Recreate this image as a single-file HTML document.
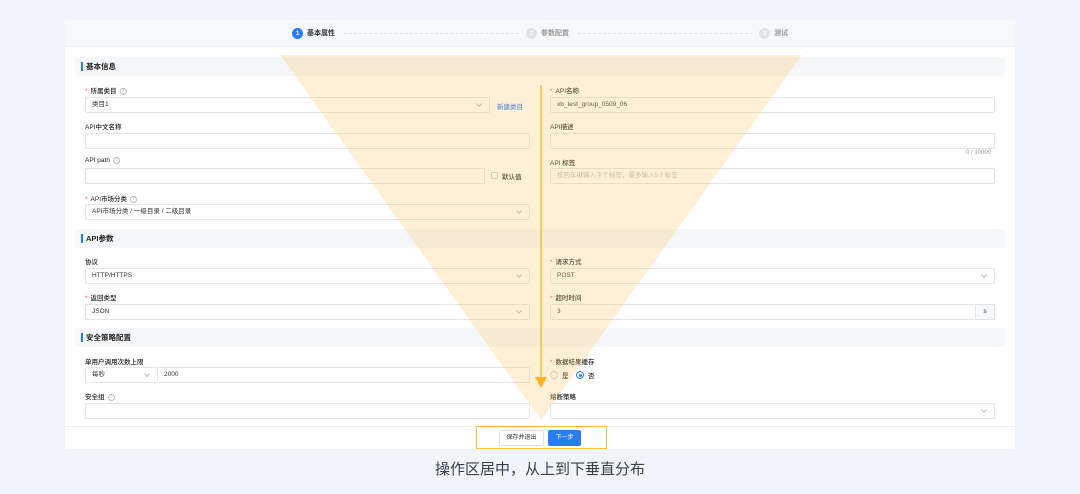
<!DOCTYPE html>
<html><head><meta charset="utf-8"><style>
*{margin:0;padding:0;box-sizing:border-box}
body{width:1080px;height:494px;background:#f1f4f8;font-family:"Liberation Sans","Noto Sans CJK SC",sans-serif;position:relative;overflow:hidden;color:#333}
.a{position:absolute}
.card{left:65px;top:20px;width:950px;height:429px;background:#fff}
.steps{left:65px;top:20px;width:950px;height:27px;background:#f7f8fa;border-bottom:1px solid #eceef2}
.sec{position:absolute;left:75px;width:930px;height:19px;background:#f6f7f9;border-radius:3px;font-size:7.5px;font-weight:bold;line-height:19px;padding-left:11px;color:#222}
.sec:before{content:"";position:absolute;left:6px;top:5px;width:2px;height:9px;background:#2b7bf6}
.lb{position:absolute;font-size:6.5px;color:#222;font-weight:500}
.lb i{color:#f5532d;font-style:normal;margin-right:3px}
.in{position:absolute;height:16px;border:1px solid #e3e5ea;border-radius:2px;background:#fff;font-size:6.5px;line-height:14px;padding-left:6px;color:#333;display:flex;align-items:center}
.ch:after{content:"";position:absolute;right:8px;top:4px;width:3px;height:3px;border-right:1px solid #bbb;border-bottom:1px solid #bbb;transform:rotate(45deg)}
.q{display:inline-block;width:7px;height:7px;border:1px solid #bbb;border-radius:50%;font-size:5px;line-height:5px;text-align:center;color:#aaa;margin-left:3px;vertical-align:middle}
.sc{width:11px;height:11px;border-radius:50%;font-size:6.5px;color:#fff;display:flex;align-items:center;justify-content:center;font-weight:bold}
.st{font-size:7px;font-weight:bold}
</style></head><body>
<div class="a card"></div>
<div class="a steps"></div>
<div class="a sc" style="left:292px;top:28px;background:#2b7bf6">1</div>
<div class="a st" style="left:307px;top:28px;color:#333">基本属性</div>
<div class="a" style="left:344px;top:33px;width:175px;border-top:1px dashed #dde0e5"></div>
<div class="a sc" style="left:526px;top:28px;background:#dfe2e7;color:#f5f6f8">2</div>
<div class="a st" style="left:541px;top:28px;color:#999">参数配置</div>
<div class="a" style="left:578px;top:33px;width:175px;border-top:1px dashed #dde0e5"></div>
<div class="a sc" style="left:759px;top:28px;background:#dfe2e7;color:#f5f6f8">3</div>
<div class="a st" style="left:774px;top:28px;color:#999">测试</div>

<div class="sec" style="top:57px">基本信息</div>
<div class="sec" style="top:229px">API参数</div>
<div class="sec" style="top:328px">安全策略配置</div>

<div class="lb" style="left:85px;top:85px"><i>*</i>所属类目<span class="q">?</span></div>
<div class="in ch" style="left:85px;top:97px;width:405px">类目1</div>
<div class="lb" style="left:497px;top:101px;color:#2b7bf6">新建类目</div>
<div class="lb" style="left:85px;top:121px">API中文名称</div>
<div class="in" style="left:85px;top:133px;width:445px"></div>
<div class="lb" style="left:85px;top:157px">API path<span class="q">?</span></div>
<div class="in" style="left:85px;top:168px;width:400px"></div>
<div class="a" style="left:491px;top:172px;width:7px;height:7px;border:1px solid #ccc;border-radius:1px"></div>
<div class="lb" style="left:502px;top:171px">默认值</div>
<div class="lb" style="left:85px;top:193px"><i>*</i>API市场分类<span class="q">?</span></div>
<div class="in ch" style="left:85px;top:204px;width:445px">API市场分类 / 一级目录 / 二级目录</div>

<div class="lb" style="left:550px;top:85px"><i>*</i>API名称</div>
<div class="in" style="left:550px;top:97px;width:445px">xb_test_group_0509_06</div>
<div class="lb" style="left:550px;top:121px">API描述</div>
<div class="in" style="left:550px;top:133px;width:445px"></div>
<div class="lb" style="left:966px;top:150px;color:#999;font-size:6px">0 / 10000</div>
<div class="lb" style="left:550px;top:157px">API 标签</div>
<div class="in" style="left:550px;top:168px;width:445px;color:#bbb">按回车键输入下个标签，最多输入5个标签</div>

<div class="lb" style="left:85px;top:256px">协议</div>
<div class="in ch" style="left:85px;top:268px;width:445px">HTTP/HTTPS</div>
<div class="lb" style="left:85px;top:292px"><i>*</i>返回类型</div>
<div class="in ch" style="left:85px;top:304px;width:445px">JSON</div>
<div class="lb" style="left:550px;top:256px"><i>*</i>请求方式</div>
<div class="in ch" style="left:550px;top:268px;width:445px">POST</div>
<div class="lb" style="left:550px;top:292px"><i>*</i>超时时间</div>
<div class="in" style="left:550px;top:304px;width:445px">3</div>
<div class="a" style="left:975px;top:304px;width:20px;height:16px;border:1px solid #e3e5ea;background:#f7f8fa;font-size:6.5px;text-align:center;line-height:14px">s</div>

<div class="lb" style="left:85px;top:356px">单用户调用次数上限</div>
<div class="in ch" style="left:85px;top:367px;width:73px">每秒</div>
<div class="in" style="left:157px;top:367px;width:373px">2000</div>
<div class="lb" style="left:85px;top:391px">安全组<span class="q">?</span></div>
<div class="in" style="left:85px;top:403px;width:445px"></div>
<div class="lb" style="left:550px;top:356px"><i>*</i>数据结果缓存</div>
<div class="a" style="left:550px;top:371px;width:8px;height:8px;border:1px solid #ccc;border-radius:50%"></div>
<div class="lb" style="left:562px;top:370px">是</div>
<div class="a" style="left:576px;top:371px;width:8px;height:8px;border:1px solid #2b7bf6;border-radius:50%"><div style="margin:1.5px;width:3px;height:3px;background:#2b7bf6;border-radius:50%"></div></div>
<div class="lb" style="left:588px;top:370px">否</div>
<div class="lb" style="left:550px;top:391px">熔断策略</div>
<div class="in ch" style="left:550px;top:403px;width:445px"></div>

<div class="a" style="left:65px;top:426px;width:950px;border-top:1px solid #eceef2"></div>
<div class="a" style="left:499px;top:430px;width:45px;height:16px;border:1px solid #dde0e5;border-radius:2px;font-size:6px;text-align:center;line-height:14px">保存并退出</div>
<div class="a" style="left:548px;top:430px;width:33px;height:16px;background:#2b7bf6;border-radius:2px;font-size:6px;text-align:center;line-height:16px;color:#fff">下一步</div>

<svg class="a" style="left:0;top:0" width="1080" height="494">
<polygon points="280,55 802,55 541,420" fill="rgba(250,200,110,0.28)"/>
<line x1="541" y1="85" x2="541" y2="378" stroke="#f7b420" stroke-width="1.3"/>
<polygon points="535,377 547,377 541,388" fill="#f7b420"/>
<rect x="476.5" y="426.5" width="130" height="22" fill="none" stroke="#f7c23c" stroke-width="1"/>
</svg>
<div class="a" style="left:0;top:458px;width:1080px;text-align:center;font-size:15px;color:#3a3f4b">操作区居中，从上到下垂直分布</div>
</body></html>
